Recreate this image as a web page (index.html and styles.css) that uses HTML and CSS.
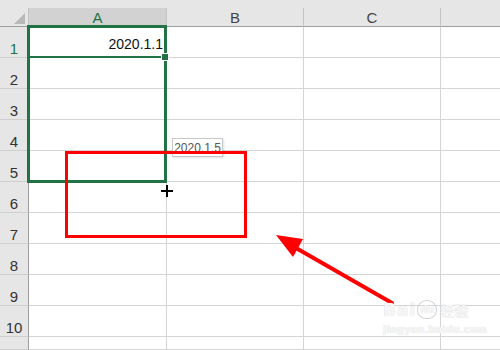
FILE: index.html
```html
<!DOCTYPE html>
<html>
<head>
<meta charset="utf-8">
<link rel="stylesheet" href="styles.css">
</head>
<body>
<div class="app">
  <div class="topstrip"></div>
  <div class="sheet">
    <div class="corner"><span class="tri"></span></div>
    <div class="colhead sel">A</div>
    <div class="colhead">B</div>
    <div class="colhead">C</div>
    <div class="colhead last"></div>

    <div class="rowhead sel">1</div><div class="cell num">2020.1.1</div><div class="cell"></div><div class="cell"></div><div class="cell last"></div>
    <div class="rowhead">2</div><div class="cell"></div><div class="cell"></div><div class="cell"></div><div class="cell last"></div>
    <div class="rowhead">3</div><div class="cell"></div><div class="cell"></div><div class="cell"></div><div class="cell last"></div>
    <div class="rowhead">4</div><div class="cell"></div><div class="cell"></div><div class="cell"></div><div class="cell last"></div>
    <div class="rowhead">5</div><div class="cell"></div><div class="cell"></div><div class="cell"></div><div class="cell last"></div>
    <div class="rowhead">6</div><div class="cell"></div><div class="cell"></div><div class="cell"></div><div class="cell last"></div>
    <div class="rowhead">7</div><div class="cell"></div><div class="cell"></div><div class="cell"></div><div class="cell last"></div>
    <div class="rowhead">8</div><div class="cell"></div><div class="cell"></div><div class="cell"></div><div class="cell last"></div>
    <div class="rowhead">9</div><div class="cell"></div><div class="cell"></div><div class="cell"></div><div class="cell last"></div>
    <div class="rowhead">10</div><div class="cell"></div><div class="cell"></div><div class="cell"></div><div class="cell last"></div>
    <div class="rowhead"></div><div class="cell"></div><div class="cell"></div><div class="cell"></div><div class="cell last"></div>
  </div>

  <div class="selection"></div>
  <div class="active-line"></div>
  <div class="handle"></div>
  <div class="tip">2020.1.5</div>
  <div class="redbox"></div>
  <div class="cross"><span class="h"></span><span class="v"></span></div>

  <svg class="arrow" width="500" height="350" viewBox="0 0 500 350">
    <line x1="392" y1="303" x2="296" y2="248" stroke="#ff0000" stroke-width="4" stroke-linecap="round"/>
    <polygon points="276,235 303,239 293,257" fill="#ff0000"/>
  </svg>

  <div class="watermark">
    <div class="wm-top"><span class="wm-bai">Bai</span><span class="wm-du">du</span><span class="wm-cn">经验</span></div>
    <div class="wm-url">jingyan.baidu.com</div>
  </div>
</div>
</body>
</html>
```

FILE: styles.css
```css
html, body {
  margin: 0;
  padding: 0;
  background: #ffffff;
}

.app {
  position: relative;
  width: 500px;
  height: 350px;
  overflow: hidden;
  font-family: "Liberation Sans", Arial, sans-serif;
  background: #ffffff;
}

.topstrip {
  height: 8px;
  background: #e6e6e6;
}

.sheet {
  display: grid;
  grid-template-columns: 29px 138px 137px 137px 1fr;
  grid-template-rows: 19px repeat(10, 31px) 1fr;
  height: 342px;
}

.corner {
  background: #e6e6e6;
  border-right: 1px solid #c2c2c2;
  border-bottom: 1px solid #9e9e9e;
  box-sizing: border-box;
  position: relative;
}

.tri {
  position: absolute;
  right: 3px;
  bottom: 2px;
  width: 0;
  height: 0;
  border-left: 11px solid transparent;
  border-bottom: 11px solid #b9b9b9;
}

.colhead {
  background: #e6e6e6;
  border-right: 1px solid #c4c4c4;
  border-bottom: 1px solid #9e9e9e;
  box-sizing: border-box;
  display: flex;
  align-items: flex-end;
  justify-content: center;
  font-size: 15px;
  line-height: 15px;
  padding-bottom: 1px;
  color: #444444;
}

.colhead.sel {
  background: #d2d2d2;
  color: #217346;
}

.colhead.last {
  border-right: none;
}

.rowhead {
  background: #e6e6e6;
  border-right: 1px solid #9e9e9e;
  border-bottom: 1px solid #cfcfcf;
  box-sizing: border-box;
  display: flex;
  align-items: flex-end;
  justify-content: center;
  font-size: 15px;
  line-height: 15px;
  padding-bottom: 1px;
  color: #333333;
}

.rowhead.sel {
  color: #217346;
}

.cell {
  border-right: 1px solid #d4d4d4;
  border-bottom: 1px solid #d4d4d4;
  box-sizing: border-box;
  background: #ffffff;
}

.cell.last {
  border-right: none;
}

.cell.num {
  display: flex;
  align-items: flex-end;
  justify-content: flex-end;
  padding: 0 3px 6px 0;
  font-size: 14px;
  line-height: 14px;
  color: #111111;
}

.selection {
  position: absolute;
  left: 27px;
  top: 25px;
  width: 140px;
  height: 158px;
  box-sizing: border-box;
  border: 3px solid #217346;
}

.active-line {
  position: absolute;
  left: 27px;
  top: 56px;
  width: 140px;
  height: 2px;
  background: #217346;
}

.handle {
  position: absolute;
  left: 162px;
  top: 54px;
  width: 6px;
  height: 6px;
  background: #217346;
  border: 1px solid #ffffff;
  box-sizing: content-box;
  margin: -1px 0 0 -1px;
}

.tip {
  position: absolute;
  left: 172px;
  top: 138px;
  width: 51px;
  height: 19px;
  box-sizing: border-box;
  border: 1px solid #c8c8c8;
  background: #ffffff;
  box-shadow: 1px 1px 2px rgba(0, 0, 0, 0.12);
  font-size: 12px;
  line-height: 18px;
  color: #555555;
  text-align: center;
  overflow: hidden;
  white-space: nowrap;
}

.redbox {
  position: absolute;
  left: 65px;
  top: 151px;
  width: 182px;
  height: 87px;
  box-sizing: border-box;
  border: 3px solid #ff0000;
}

.cross {
  position: absolute;
  left: 161px;
  top: 185px;
  width: 12px;
  height: 12px;
}

.cross .h {
  position: absolute;
  left: 0;
  top: 5px;
  width: 12px;
  height: 2px;
  background: #000000;
}

.cross .v {
  position: absolute;
  left: 5px;
  top: 0;
  width: 2px;
  height: 12px;
  background: #000000;
}

.arrow {
  position: absolute;
  left: 0;
  top: 0;
}

.watermark {
  position: absolute;
  left: 383px;
  top: 297px;
  width: 95px;
  color: #f6f6f6;
  text-shadow: 0 0 1px #d0d0d0;
  font-family: "DejaVu Sans", "Noto Sans CJK SC", sans-serif;
  font-weight: bold;
}

.wm-top {
  display: flex;
  align-items: flex-end;
  height: 22px;
}

.wm-bai {
  font-size: 17px;
  line-height: 17px;
  letter-spacing: 1px;
}

.wm-du {
  display: inline-flex;
  align-items: center;
  justify-content: center;
  width: 18px;
  height: 17px;
  margin: 0 3px 0 1px;
  border-radius: 50% 50% 45% 45%;
  border: 1px solid #d4d4d4;
  font-size: 10px;
  line-height: 10px;
}

.wm-cn {
  font-size: 14px;
  line-height: 16px;
}

.wm-url {
  margin-top: 5px;
  font-size: 10px;
  line-height: 12px;
}
```
